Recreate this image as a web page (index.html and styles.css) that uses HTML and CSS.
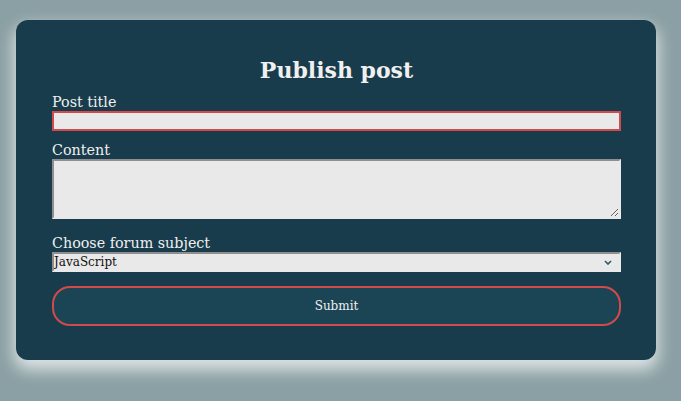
FILE: index.html
```html
<!DOCTYPE html>
<html>
<head>
<meta charset="utf-8">
<link rel="stylesheet" href="styles.css">
</head>
<body>
<form class="card">
  <h2 class="title">Publish post</h2>
  <label class="label" for="t">Post title</label>
  <input class="field field-title" id="t" type="text">
  <label class="label label-content" for="c">Content</label>
  <textarea class="field field-content" id="c"></textarea>
  <label class="label label-select" for="s">Choose forum subject</label>
  <div class="select-wrap">
    <select class="field field-select" id="s">
      <option>JavaScript</option>
    </select>
    <svg class="chevron" width="8" height="5" viewBox="0 0 8 5"><path d="M1 1 L4 4 L7 1" fill="none" stroke="#2f5566" stroke-width="1.6"/></svg>
  </div>
  <button class="submit" type="button">Submit</button>
</form>
</body>
</html>
```
FILE: styles.css
```css
html {
  background: #8ba0a4;
}
html, body {
  margin: 0;
  padding: 0;
  font-family: "DejaVu Serif", Georgia, serif;
}
body {
  padding: 20px 0 0 16px;
  height: 401px;
  box-sizing: border-box;
}
.card {
  box-sizing: border-box;
  width: 640px;
  height: 340px;
  background: #183c4c;
  border-radius: 12px;
  box-shadow: 0 8px 16px 2px rgba(255, 255, 255, 0.7);
  padding: 36px 35px 0 36px;
  display: flex;
  flex-direction: column;
  color: #f0f0f0;
}
.title {
  margin: 0 0 9px;
  font-size: 22px;
  line-height: 28px;
  text-align: center;
  font-weight: bold;
}
.label {
  font-size: 14.3px;
  line-height: 18px;
  display: block;
}
.label-content {
  margin-top: 10px;
}
.label-select {
  margin-top: 15px;
}
.field {
  box-sizing: border-box;
  width: 569px;
  margin: 0;
  background: #e9e9e9;
  font-family: "DejaVu Serif", Georgia, serif;
}
.field-title {
  height: 20px;
  border: 2px solid #d24a4a;
  outline: none;
}
.field-content {
  display: block;
  height: 60px;
  border: 2px solid;
  border-color: #8f8f8f #e9e9e9 #e9e9e9 #8f8f8f;
  resize: both;
}
.select-wrap {
  position: relative;
  width: 569px;
  height: 20px;
}
.field-select {
  display: block;
  height: 20px;
  border: 2px solid;
  border-color: #8f8f8f #e9e9e9 #e9e9e9 #8f8f8f;
  font-size: 12px;
  color: #111;
  padding: 0;
  appearance: none;
  -webkit-appearance: none;
  border-radius: 0;
}
.chevron {
  position: absolute;
  right: 9px;
  top: 8px;
  pointer-events: none;
}
.submit {
  box-sizing: border-box;
  width: 569px;
  height: 40px;
  margin-top: 14px;
  border: 2px solid #d24a4a;
  border-radius: 18px;
  background: #1b4555;
  color: #f0f0f0;
  font-family: "DejaVu Serif", Georgia, serif;
  font-size: 12px;
}
```
